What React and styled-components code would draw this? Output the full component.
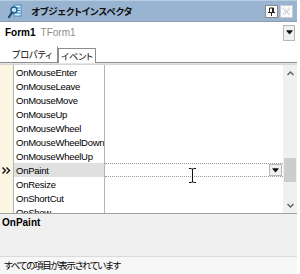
import React from 'react';
import styled, { createGlobalStyle } from 'styled-components';

const GlobalStyle = createGlobalStyle`
  html, body {
    margin: 0;
    padding: 0;
    background: #ffffff;
  }
  body {
    font-family: "Liberation Sans", "Noto Sans CJK JP", sans-serif;
    font-size: 10px;
    color: #000;
  }
`;

const jp = `"Noto Sans CJK JP", "Liberation Sans", sans-serif`;

const Window = styled.div`
  width: 297px;
  height: 274px;
  display: flex;
  flex-direction: column;
  background: #ffffff;
  overflow: hidden;
`;

const TitleBar = styled.div`
  height: 20px;
  display: flex;
  align-items: center;
  padding: 0 4px 0 8px;
  background: #99b4d1;
  border-top: 1px solid #b9cde2;
  border-bottom: 1px solid #8e9cae;
`;

const Title = styled.div`
  flex: 1;
  margin-left: 9px;
  font-family: ${jp};
  font-feature-settings: "palt";
  font-weight: 700;
  font-size: 9.5px;
  letter-spacing: -0.2px;
  color: #111;
`;

const TitleButton = styled.div`
  width: 11px;
  height: 11px;
  margin-left: 2px;
  display: flex;
  align-items: center;
  justify-content: center;
  background: #fbfbfb;
  border: 1px solid ${p => (p.$dim ? '#c8cdd4' : '#8a8a8a')};
`;

const ComboRow = styled.div`
  height: 17px;
  margin: 2px 2px 0 2px;
  display: flex;
  align-items: center;
  background: #fff;
`;

const ComboText = styled.div`
  flex: 1;
  padding-left: 3px;
  white-space: nowrap;
`;

const Bold = styled.span`
  font-weight: 700;
`;

const Muted = styled.span`
  color: #8c8c8c;
  margin-left: 5px;
`;

const DropButton = styled.div`
  width: ${p => p.$w || 12}px;
  height: ${p => p.$h || 15}px;
  display: flex;
  align-items: center;
  justify-content: center;
  background: #f0f0f0;
  border: 1px solid #b8b8b8;
  box-sizing: border-box;
`;

const TabStrip = styled.div`
  height: 16px;
  margin-top: 5px;
  padding-left: 6px;
  display: flex;
  align-items: flex-end;
  border-bottom: 1px solid #8c8c8c;
  box-shadow: 0 1px 0 #e4e4e4;
`;

const Tab = styled.div`
  height: ${p => (p.$active ? 14 : 15)}px;
  padding: 0 ${p => (p.$active ? 2 : 5)}px;
  display: flex;
  align-items: center;
  font-family: ${jp};
  font-feature-settings: "palt";
  font-size: 9px;
  background: #fff;
  border: 1px solid ${p => (p.$active ? '#8c8c8c' : 'transparent')};
  border-right-color: #8c8c8c;
  border-bottom: none;
  margin-bottom: ${p => (p.$active ? -1 : 0)}px;
  border-left-color: ${p => (p.$active ? '#8c8c8c' : 'transparent')};
`;

const Grid = styled.div`
  position: relative;
  height: 148px;
  margin-top: 1px;
  display: flex;
  border-top: 1px solid #d6d6d6;
  overflow: hidden;
`;

const Rows = styled.div`
  flex: 1;
  display: flex;
  flex-direction: column;
`;

const Row = styled.div`
  height: 14px;
  flex: none;
  display: grid;
  grid-template-columns: 14px 91px 1fr;
`;

const Gutter = styled.div`
  background: #fcf5e1;
  border-right: 1px solid #b4b4b4;
  display: flex;
  align-items: center;
  justify-content: center;
`;

const NameCell = styled.div`
  padding-left: 2px;
  display: flex;
  align-items: center;
  font-size: 9.5px;
  letter-spacing: -0.25px;
  white-space: nowrap;
  overflow: hidden;
  background: ${p => (p.$selected ? '#e0e0e0' : '#fff')};
  border-right: 1px solid #b4b4b4;
`;

const ValueCell = styled.div`
  display: flex;
  align-items: center;
  justify-content: flex-end;
  padding-right: 1px;
  box-sizing: border-box;
  border-top: 1px dotted ${p => (p.$selected ? '#9a9a9a' : 'transparent')};
  border-bottom: 1px dotted ${p => (p.$selected ? '#9a9a9a' : 'transparent')};
`;

const Scrollbar = styled.div`
  width: 14px;
  display: flex;
  flex-direction: column;
  align-items: center;
  background: #f0f0f0;
`;

const ScrollArrow = styled.div`
  height: 16px;
  display: flex;
  align-items: center;
  justify-content: center;
  flex: none;
`;

const Track = styled.div`
  flex: 1;
  width: 100%;
  display: flex;
  flex-direction: column;
  padding-top: 77px;
`;

const Thumb = styled.div`
  height: 24px;
  margin: 0 1px;
  background: #cdcdcd;
`;

const Cursor = styled.svg`
  position: absolute;
  left: 189px;
  top: 103px;
`;

const Description = styled.div`
  height: 36px;
  padding: 3px 2px;
  background: #f0f0f0;
  border-top: 1px solid #a0a0a0;
  border-bottom: 1px solid #dadada;
  font-weight: 700;
`;

const StatusBar = styled.div`
  flex: 1;
  display: flex;
  align-items: center;
  padding-left: 4px;
  padding-bottom: 2px;
  font-family: ${jp};
  font-feature-settings: "palt";
  font-size: 9.5px;
  letter-spacing: -1.3px;
  background: #f7f7f7;
`;

const events = [
  'OnMouseEnter',
  'OnMouseLeave',
  'OnMouseMove',
  'OnMouseUp',
  'OnMouseWheel',
  'OnMouseWheelDown',
  'OnMouseWheelUp',
  'OnPaint',
  'OnResize',
  'OnShortCut',
  'OnShow',
];

const DownTriangle = () => (
  <svg width="7" height="5" viewBox="0 0 7 5">
    <path d="M0 0.5h7L3.5 4.5z" fill="#111" />
    <path d="M1 0h5" stroke="#111" />
  </svg>
);

const InspectorIcon = () => (
  <svg width="14" height="15" viewBox="0 0 14 15">
    <rect x="6" y="1" width="7" height="11" fill="#dff0fb" stroke="#3c8fc4" />
    <path d="M8 4h4M8 6.5h4M8 9h4" stroke="#2a7fb8" strokeWidth="1" />
    <circle cx="6" cy="6" r="3" fill="#bfe4f7" stroke="#1d5f86" strokeWidth="1.4" />
    <path d="M4 8.5L1 13" stroke="#1a4f70" strokeWidth="2.2" strokeLinecap="round" />
  </svg>
);

const PinIcon = () => (
  <svg width="9" height="9" viewBox="0 0 9 9">
    <path d="M2.5 1h4v4.5h-4zM5.5 1v4.5M1 5.5h7M4.5 5.5V9" stroke="#222" fill="none" strokeWidth="1" />
  </svg>
);

const CloseIcon = () => (
  <svg width="9" height="9" viewBox="0 0 9 9">
    <path d="M1 1l7 7M8 1l-7 7" stroke="#c3c9d1" strokeWidth="2" strokeDasharray="1 1" />
  </svg>
);

const SelArrow = () => (
  <svg width="9" height="7" viewBox="0 0 9 7">
    <path d="M0.5 0.5l3 3-3 3M4.5 0.5l3 3-3 3" stroke="#111" strokeWidth="1.4" fill="none" />
  </svg>
);

const Chevron = ({ up }) => (
  <svg width="7" height="5" viewBox="0 0 7 5">
    <path d={up ? 'M0.5 4L3.5 1l3 3' : 'M0.5 1l3 3 3-3'} stroke="#606060" strokeWidth="1.4" fill="none" />
  </svg>
);

export default function App() {
  const selected = 'OnPaint';
  return (
    <>
      <GlobalStyle />
      <Window>
        <TitleBar>
          <InspectorIcon />
          <Title>オブジェクトインスペクタ</Title>
          <TitleButton>
            <PinIcon />
          </TitleButton>
          <TitleButton $dim>
            <CloseIcon />
          </TitleButton>
        </TitleBar>

        <ComboRow>
          <ComboText>
            <Bold>Form1</Bold>
            <Muted>TForm1</Muted>
          </ComboText>
          <DropButton $w={12} $h={16}>
            <DownTriangle />
          </DropButton>
        </ComboRow>

        <TabStrip>
          <Tab>プロパティ</Tab>
          <Tab $active>イベント</Tab>
        </TabStrip>

        <Grid>
          <Rows>
            {events.map(name => {
              const sel = name === selected;
              return (
                <Row key={name}>
                  <Gutter>{sel && <SelArrow />}</Gutter>
                  <NameCell $selected={sel}>{name}</NameCell>
                  <ValueCell $selected={sel}>
                    {sel && (
                      <DropButton $w={13} $h={12}>
                        <DownTriangle />
                      </DropButton>
                    )}
                  </ValueCell>
                </Row>
              );
            })}
          </Rows>
          <Scrollbar>
            <ScrollArrow>
              <Chevron up />
            </ScrollArrow>
            <Track>
              <Thumb />
            </Track>
            <ScrollArrow>
              <Chevron />
            </ScrollArrow>
          </Scrollbar>
          <Cursor width="7" height="15" viewBox="0 0 7 15">
            <path d="M0 0.5h2.5M4.5 0.5H7M3.5 1v13M0 14.5h2.5M4.5 14.5H7M2.5 1h2M2.5 14h2" stroke="#111" strokeWidth="1" fill="none" />
          </Cursor>
        </Grid>

        <Description>OnPaint</Description>

        <StatusBar>すべての項目が表示されています</StatusBar>
      </Window>
    </>
  );
}
